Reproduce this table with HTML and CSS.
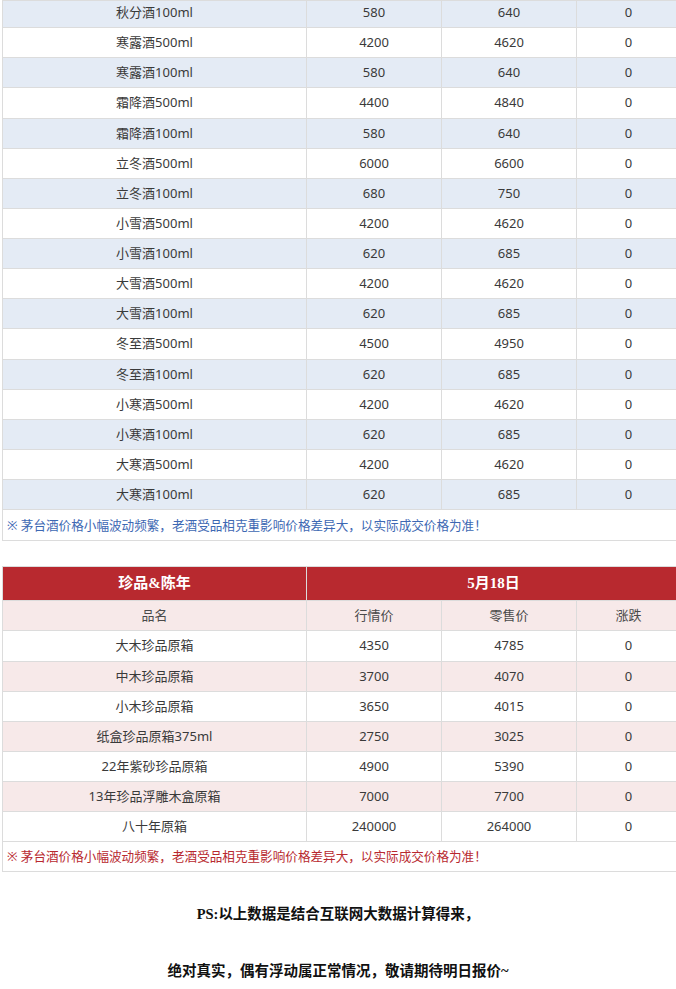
FILE: index.html
```html
<!DOCTYPE html>
<html lang="zh-CN">
<head>
<meta charset="utf-8">
<title>茅台酒价格</title>
<link rel="stylesheet" href="styles.css">
</head>
<body>
<div class="page">
  <table class="price blue-tbl">
    <colgroup><col class="c1"><col class="c2"><col class="c3"><col class="c4"></colgroup>
    <tbody>
      <tr class="alt cut"><td>秋分酒100ml</td><td>580</td><td>640</td><td>0</td></tr>
      <tr><td>寒露酒500ml</td><td>4200</td><td>4620</td><td>0</td></tr>
      <tr class="alt"><td>寒露酒100ml</td><td>580</td><td>640</td><td>0</td></tr>
      <tr><td>霜降酒500ml</td><td>4400</td><td>4840</td><td>0</td></tr>
      <tr class="alt"><td>霜降酒100ml</td><td>580</td><td>640</td><td>0</td></tr>
      <tr><td>立冬酒500ml</td><td>6000</td><td>6600</td><td>0</td></tr>
      <tr class="alt"><td>立冬酒100ml</td><td>680</td><td>750</td><td>0</td></tr>
      <tr><td>小雪酒500ml</td><td>4200</td><td>4620</td><td>0</td></tr>
      <tr class="alt"><td>小雪酒100ml</td><td>620</td><td>685</td><td>0</td></tr>
      <tr><td>大雪酒500ml</td><td>4200</td><td>4620</td><td>0</td></tr>
      <tr class="alt"><td>大雪酒100ml</td><td>620</td><td>685</td><td>0</td></tr>
      <tr><td>冬至酒500ml</td><td>4500</td><td>4950</td><td>0</td></tr>
      <tr class="alt"><td>冬至酒100ml</td><td>620</td><td>685</td><td>0</td></tr>
      <tr><td>小寒酒500ml</td><td>4200</td><td>4620</td><td>0</td></tr>
      <tr class="alt"><td>小寒酒100ml</td><td>620</td><td>685</td><td>0</td></tr>
      <tr><td>大寒酒500ml</td><td>4200</td><td>4620</td><td>0</td></tr>
      <tr class="alt"><td>大寒酒100ml</td><td>620</td><td>685</td><td>0</td></tr>
      <tr><td class="note" colspan="4">※ 茅台酒价格小幅波动频繁，老酒受品相克重影响价格差异大，以实际成交价格为准！</td></tr>
    </tbody>
  </table>

  <table class="price red-tbl">
    <colgroup><col class="c1"><col class="c2"><col class="c3"><col class="c4"></colgroup>
    <thead>
      <tr class="head"><th>珍品&amp;陈年</th><th colspan="3">5月18日</th></tr>
    </thead>
    <tbody>
      <tr class="alt sub"><td>品名</td><td>行情价</td><td>零售价</td><td>涨跌</td></tr>
      <tr><td>大木珍品原箱</td><td>4350</td><td>4785</td><td>0</td></tr>
      <tr class="alt"><td>中木珍品原箱</td><td>3700</td><td>4070</td><td>0</td></tr>
      <tr><td>小木珍品原箱</td><td>3650</td><td>4015</td><td>0</td></tr>
      <tr class="alt"><td>纸盒珍品原箱375ml</td><td>2750</td><td>3025</td><td>0</td></tr>
      <tr><td>22年紫砂珍品原箱</td><td>4900</td><td>5390</td><td>0</td></tr>
      <tr class="alt"><td>13年珍品浮雕木盒原箱</td><td>7000</td><td>7700</td><td>0</td></tr>
      <tr><td>八十年原箱</td><td>240000</td><td>264000</td><td>0</td></tr>
      <tr><td class="note" colspan="4">※ 茅台酒价格小幅波动频繁，老酒受品相克重影响价格差异大，以实际成交价格为准！</td></tr>
    </tbody>
  </table>

  <div class="ps">
    <p>PS:以上数据是结合互联网大数据计算得来，</p>
    <p>绝对真实，偶有浮动属正常情况，敬请期待明日报价~</p>
  </div>
</div>
</body>
</html>
```
FILE: styles.css
```css
html, body {
  margin: 0;
  padding: 0;
  background: #fff;
  overflow: hidden;
}

.page {
  width: 676px;
  overflow: hidden;
  padding-left: 2px;
  box-sizing: border-box;
}

.price {
  width: 678px;
  table-layout: fixed;
  border-collapse: collapse;
  font-family: "Noto Sans", "Noto Sans CJK SC", sans-serif;
  font-size: 13px;
  color: #3a3a3a;
}

.price col.c1 { width: 304px; }
.price col.c2 { width: 135px; }
.price col.c3 { width: 135px; }
.price col.c4 { width: 104px; }

.price td,
.price th {
  border: 1px solid #dcdcdc;
  padding: 5px 6px;
  line-height: 19.13px;
  text-align: center;
  white-space: nowrap;
  overflow: hidden;
}

.price tr.cut td {
  padding-top: 2px;
}

.blue-tbl tr.alt td { background: #e4ebf5; }
.red-tbl tr.alt td { background: #f7e9e9; }

.price td.note {
  text-align: left;
  padding-left: 4px;
  font-size: 12.6px;
  letter-spacing: 0;
}
.blue-tbl td.note {
  color: #3d68b3;
  padding-top: 6px;
}
.red-tbl td.note { color: #b8292f; }

.red-tbl {
  margin-top: 25px;
}

.red-tbl tr.head th {
  background: #b8292f;
  color: #fff;
  font-family: "Liberation Serif", "Noto Sans CJK SC", serif;
  font-weight: bold;
  font-size: 15px;
  line-height: 21px;
  padding: 6px 6px;
  border-color: #dcdcdc;
}

.red-tbl tr.sub td { color: #4a4a4a; }

.ps {
  width: 676px;
  margin-left: -2px;
  margin-top: 28px;
  display: flex;
  flex-direction: column;
  gap: 29px;
  font-family: "Liberation Serif", "Noto Sans CJK SC", serif;
  font-weight: bold;
  font-size: 14.5px;
  color: #111;
  text-align: center;
}

.ps p {
  margin: 0;
  line-height: 28px;
}
```
